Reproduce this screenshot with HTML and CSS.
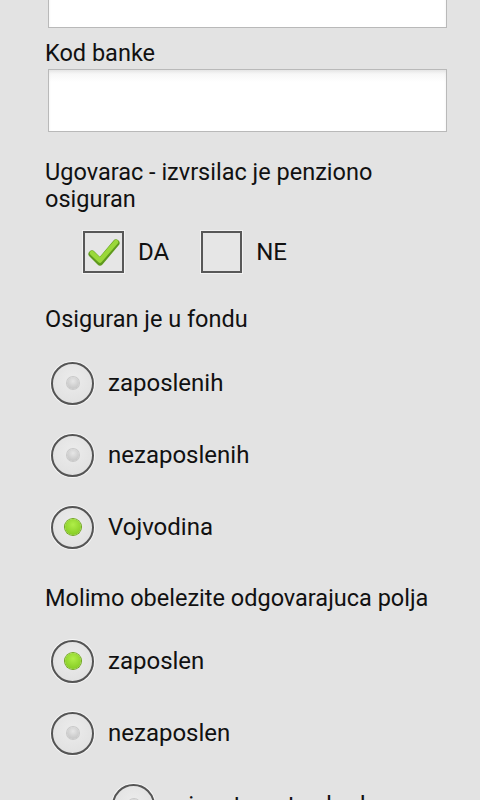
FILE: index.html
```html
<!DOCTYPE html>
<html>
<head>
<meta charset="utf-8">
<link rel="stylesheet" href="styles.css">
</head>
<body>
<div class="form">
  <div class="field field-top"></div>
  <div class="label label-kod">Kod banke</div>
  <div class="field"></div>

  <div class="label label-q">Ugovarac - izvrsilac je penziono osiguran</div>
  <div class="checks">
    <div class="check">
      <span class="box">
        <svg viewBox="0 0 37 37" width="37" height="37">
          <path d="M7 20 L15 28 L31 9" fill="none" stroke="#5f9a1e" stroke-width="7" stroke-linecap="round" stroke-linejoin="round"/>
          <path d="M7 19 L15 26.5 L31 8" fill="none" stroke="#9ad83a" stroke-width="4.5" stroke-linecap="round" stroke-linejoin="round"/>
        </svg>
      </span>
      <span class="check-text">DA</span>
    </div>
    <div class="check">
      <span class="box"></span>
      <span class="check-text">NE</span>
    </div>
  </div>

  <div class="label label-group">Osiguran je u fondu</div>
  <div class="radios">
    <div class="radio"><span class="circle"><span class="dot"></span></span><span class="radio-text">zaposlenih</span></div>
    <div class="radio"><span class="circle"><span class="dot"></span></span><span class="radio-text">nezaposlenih</span></div>
    <div class="radio"><span class="circle"><span class="dot on"></span></span><span class="radio-text">Vojvodina</span></div>
  </div>

  <div class="label label-group2">Molimo obelezite odgovarajuca polja</div>
  <div class="radios">
    <div class="radio"><span class="circle"><span class="dot on"></span></span><span class="radio-text">zaposlen</span></div>
    <div class="radio"><span class="circle"><span class="dot"></span></span><span class="radio-text">nezaposlen</span></div>
    <div class="radio sub"><span class="circle"><span class="dot"></span></span><span class="radio-text">u inostranstvu kod</span></div>
  </div>
</div>
</body>
</html>
```

FILE: styles.css
```css
html, body {
  margin: 0;
  padding: 0;
  background: #e3e3e3;
  height: 800px;
  overflow: hidden;
}
body {
  font-family: Roboto, "Noto Sans", sans-serif;
  color: #111;
}
.form {
  display: flex;
  flex-direction: column;
  padding: 0 34px 0 45px;
}
.field {
  margin-left: 3px;
  width: 397px;
  height: 61px;
  border: 1px solid #b9b9b9;
  background: linear-gradient(#f3f3f3, #ffffff 12px);
  box-shadow: inset 0 2px 3px rgba(0,0,0,0.06);
}
.field-top {
  margin-top: -35px;
}
.label {
  font-size: 23.5px;
  line-height: 27px;
}
.label-kod {
  margin-top: 12px;
  margin-bottom: 2px;
}
.label-q {
  margin-top: 27px;
}
.checks {
  display: flex;
  align-items: center;
  margin-top: 18px;
  padding-left: 38px;
}
.check {
  display: flex;
  align-items: center;
}
.box {
  width: 37px;
  height: 38px;
  border: 2px solid #585858;
  background: #e6e6e6;
  box-shadow: 0 0 0 1px #f2f2f2;
  display: flex;
  align-items: center;
  justify-content: center;
}
.check-text {
  font-size: 24px;
  margin-left: 14px;
  margin-right: 32px;
}
.label-group {
  margin-top: 33px;
}
.label-group2 {
  margin-top: 22px;
}
.radios {
  display: flex;
  flex-direction: column;
  margin-top: 14px;
}
.label-group2 + .radios {
  margin-top: 13px;
}
.radio {
  display: flex;
  align-items: center;
  height: 72px;
}
.radio.sub {
  padding-left: 61px;
}
.circle {
  width: 39px;
  height: 39px;
  margin-left: 6px;
  border-radius: 50%;
  border: 2px solid #555;
  background: radial-gradient(circle at 50% 40%, #ececec, #dedede);
  box-shadow: 0 0 0 1px #f6f6f6;
  display: flex;
  align-items: center;
  justify-content: center;
}
.dot {
  width: 12px;
  height: 12px;
  border-radius: 50%;
  background: radial-gradient(circle at 50% 35%, #e6e6e6, #bdbdbd);
  box-shadow: 0 0 0 1px #c9c9c9;
}
.dot.on {
  width: 16px;
  height: 16px;
  background: radial-gradient(circle at 50% 35%, #b0ee48, #7cc41c);
  box-shadow: 0 0 0 1px #6fa51c;
}
.radio-text {
  font-size: 24px;
  margin-left: 14px;
}
```
